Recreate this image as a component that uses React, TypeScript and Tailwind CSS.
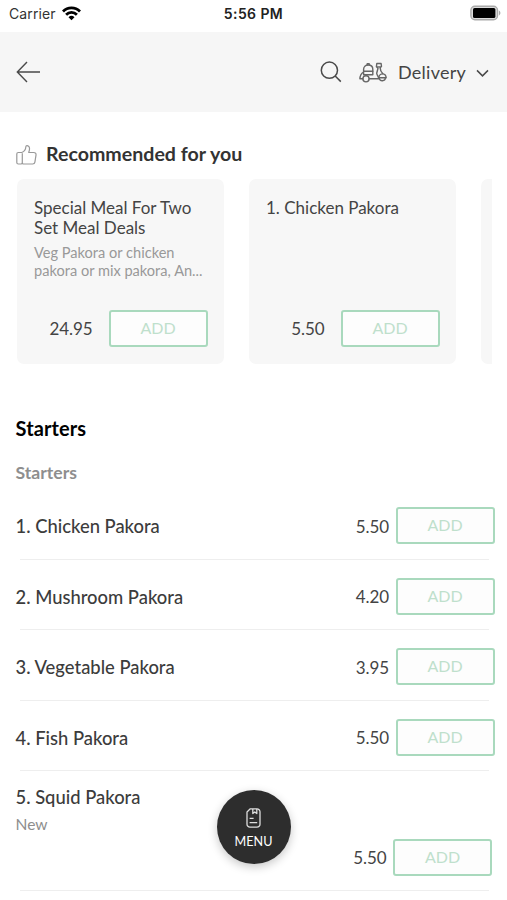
import React from "react";

function AddButton() {
  return (
    <button className="h-[37px] w-[99px] shrink-0 rounded-[3px] border-2 border-[#a9d9bd] bg-[#fdfdfd] pb-px text-[16px] leading-[32px] text-[#bfe0cc]">
      ADD
    </button>
  );
}

function StatusBar() {
  return (
    <div className="grid h-8 grid-cols-3 items-start pt-[5px] font-['Inter','Liberation_Sans',sans-serif] leading-[18px]">
      <div className="flex items-center pl-[9px] text-[14px] text-[#333]">
        <span className="tracking-[0.1px]">Carrier</span>
        <svg className="-mt-[2px] ml-[6px] h-[15px] w-[19px]" viewBox="0 0 19 15" fill="none" stroke="#000" strokeWidth="2.8">
          <path d="M1 5.4a12 12 0 0 1 17 0" />
          <path d="M4.1 8.7a7.6 7.6 0 0 1 10.8 0" />
          <path d="M9.5 14.3 6.5 11.2a4.3 4.3 0 0 1 6 0z" fill="#000" stroke="none" />
        </svg>
      </div>
      <div className="text-center text-[14px] font-semibold tracking-[0.4px] text-[#222]">5:56 PM</div>
      <div className="flex items-center justify-end pr-[6px]">
        <svg className="h-4 w-[31px]" viewBox="0 0 31 16">
          <rect x=".9" y="1.2" width="26.6" height="13.6" rx="4" fill="#ddd" stroke="#aaa" strokeWidth="1.4" />
          <rect x="3" y="3" width="22.4" height="10" rx="1.6" fill="#000" />
          <path d="M28.9 5.6c2 .7 2 4.1 0 4.8z" fill="#aaa" />
        </svg>
      </div>
    </div>
  );
}

function Header() {
  return (
    <header className="flex h-20 items-center bg-[#f6f6f6] pl-4 pr-[18px] text-[#4a4a4a]">
      <svg className="h-[22px] w-[25px]" viewBox="0 0 25 22" fill="none" stroke="currentColor" strokeWidth="1.4">
        <path d="M24 11H1.5M11 1 1.3 11l9.7 10" />
      </svg>
      <svg className="ml-auto h-[22px] w-[22px]" viewBox="0 0 22 22" fill="none" stroke="currentColor" strokeWidth="1.5">
        <circle cx="9.4" cy="9.2" r="8.1" />
        <path d="m15.2 15 5.6 5.6" />
      </svg>
      <svg className="ml-[17px] h-[21px] w-[28px]" viewBox="0 0 28 21" fill="none" stroke="#666" strokeWidth="1.4" strokeLinejoin="round" strokeLinecap="round">
        <path d="M4.6 9.2V7.4c0-2.6 1.9-4.4 4.6-4.4s4.6 1.8 4.6 4.4v1.8z" />
        <path d="M8.2 3V1.8h2V3M4.6 9.2v3.6h9.2V9.2M4.6 10C2.3 11.4 1 13.8.9 16.8h2.9" />
        <path d="M10.3 16.8h9.4c.2-1.8-1.9-3.6-2-5.6l1.3-5-1.6-1.4.4-3.3h4.3l.4 2.9-1.4 1.2c.1 2.4 1 4.6 2.8 6.2M17.9 4.9h3.6" />
        <path d="M19.7 15.8c.4-2.5 2.3-4.2 4.3-3.9 1.7.2 3 1.6 3.2 3.9z" />
        <circle cx="7" cy="16.8" r="3.1" />
        <path d="M20.3 16.4a3.1 3.1 0 0 0 6.1-.4" />
      </svg>
      <span className="ml-[11px] w-[70px] whitespace-nowrap text-[18px] leading-6 tracking-[0.25px] text-[#444]">Delivery</span>
      <svg className="ml-[8px] mt-[3px] h-[9px] w-[13px]" viewBox="0 0 13 9" fill="none" stroke="currentColor" strokeWidth="1.5">
        <path d="m1 1.4 5.5 5.5L12 1.4" />
      </svg>
    </header>
  );
}

interface CardProps {
  title: string[];
  description?: string[];
  price: string;
}

function Card({ title, description, price }: CardProps) {
  return (
    <article className="flex h-[185px] w-[207px] shrink-0 flex-col rounded-[7px] bg-[#f7f7f7] pb-[17.5px] pl-[17px] pr-[16.5px] pt-[19px]">
      <h3 className="whitespace-nowrap text-[17px] leading-5 text-[#444]">
        {title.map((line) => (
          <span key={line} className="block">{line}</span>
        ))}
      </h3>
      {description && (
        <p className="mt-[6px] whitespace-nowrap text-[14.6px] leading-[17.5px] text-[#999]">
          {description.map((line) => (
            <span key={line} className="block">{line}</span>
          ))}
        </p>
      )}
      <div className="mt-auto flex items-center justify-end gap-4">
        <span className="pt-px text-[17px] tracking-[-0.1px] text-[#444]">{price}</span>
        <AddButton />
      </div>
    </article>
  );
}

const items = [
  { name: "1. Chicken Pakora", price: "5.50" },
  { name: "2. Mushroom Pakora", price: "4.20" },
  { name: "3. Vegetable Pakora", price: "3.95" },
  { name: "4. Fish Pakora", price: "5.50" },
];

export default function App() {
  return (
    <div className="relative h-[900px] w-[507px] overflow-hidden bg-white font-['Lato','Liberation_Sans',sans-serif]">
      <StatusBar />
      <Header />
      <section className="pl-4 pr-[15px] pt-[29px]">
        <h2 className="flex h-[27px] items-center text-[19.6px] font-bold text-[#333]">
          <svg className="mr-[9px] h-[20px] w-[21px]" viewBox="0 0 21 20" fill="none" stroke="#999" strokeWidth="1.2" strokeLinejoin="round">
            <path d="M6.3 8.2v9.2c0 1-.6 1.6-1.5 1.6H2.3C1.3 19 .8 18.4.8 17.5V9.1c0-1 .5-1.6 1.5-1.6h3.4c2.4-.8 4-3 4.2-6 .1-1 1.7-1.2 2.7-.2 1.1 1 1.1 3.6.1 6.2h5c1.6 0 2.5.9 2.3 2.6l-1.1 7c-.2 1.2-.9 1.9-2.2 1.9H7.8c-.9 0-1.5-.6-1.5-1.6" />
          </svg>
          <span className="-mt-px">Recommended for you</span>
        </h2>
        <div className="ml-px mt-[11px] flex gap-[25px] overflow-hidden">
          <Card
            title={["Special Meal For Two", "Set Meal Deals"]}
            description={["Veg Pakora or chicken", "pakora or mix pakora, An..."]}
            price="24.95"
          />
          <Card title={["1. Chicken Pakora"]} price="5.50" />
          <div className="h-[185px] w-[207px] shrink-0 rounded-[7px] bg-[#f7f7f7]" />
        </div>
      </section>

      <section className="pt-[51px]">
        <h2 className="pl-[15.5px] text-[20px] font-bold leading-[26px] tracking-[0.1px] text-black">Starters</h2>
        <h3 className="mt-[20px] pl-[15.5px] text-[17.6px] font-bold leading-6 text-[#8e8e8e]">Starters</h3>
        <ul className="mt-[4px]">
          {items.map((item) => (
            <li key={item.name} className="h-[70.6px]">
              <div className="flex h-[69.6px] items-center pl-[15.5px] pr-[12.5px] pt-[4px]">
                <span className="pt-[2px] text-[18.4px] font-medium text-[#3c3c3c]">{item.name}</span>
                <span className="ml-auto mr-[6.5px] pt-px text-[17px] tracking-[-0.1px] text-[#444]">{item.price}</span>
                <AddButton />
              </div>
              <div className="ml-5 mr-[18px] h-px bg-[#eee]" />
            </li>
          ))}
          <li>
            <div className="h-[119px] pl-[15.5px] pr-[15px] pt-[14px]">
              <div className="text-[18.4px] font-medium leading-6 text-[#3c3c3c]">5. Squid Pakora</div>
              <div className="mt-[4px] text-[15.6px] leading-[22px] text-[#8e8e8e]">New</div>
              <div className="mt-[4px] flex items-center justify-end gap-[6.5px]">
                <span className="text-[17px] tracking-[-0.1px] text-[#444]">5.50</span>
                <AddButton />
              </div>
            </div>
            <div className="ml-5 mr-[18px] h-px bg-[#eee]" />
          </li>
        </ul>
      </section>

      <button className="absolute left-[217px] top-[790px] flex h-[74px] w-[74px] flex-col items-center rounded-full bg-[#2d2d2d] pr-px pt-[18px] text-[12.6px] leading-4 text-white shadow-[0_3px_10px_rgba(0,0,0,0.22)]">
        <svg className="mb-[6px] h-[20px] w-[15px]" viewBox="0 0 15 20" fill="none" stroke="#ddd" strokeWidth="1.3" strokeLinejoin="round">
          <path d="M4.3.8H11a3 3 0 0 1 3 3v12.4a3 3 0 0 1-3 3H4a3 3 0 0 1-3-3V4z" />
          <path d="M6.8 1v4.5l2-1.5 2 1.5V1M3.6 10.4h4M3.6 14.6h7.6" />
        </svg>
        MENU
      </button>
    </div>
  );
}
